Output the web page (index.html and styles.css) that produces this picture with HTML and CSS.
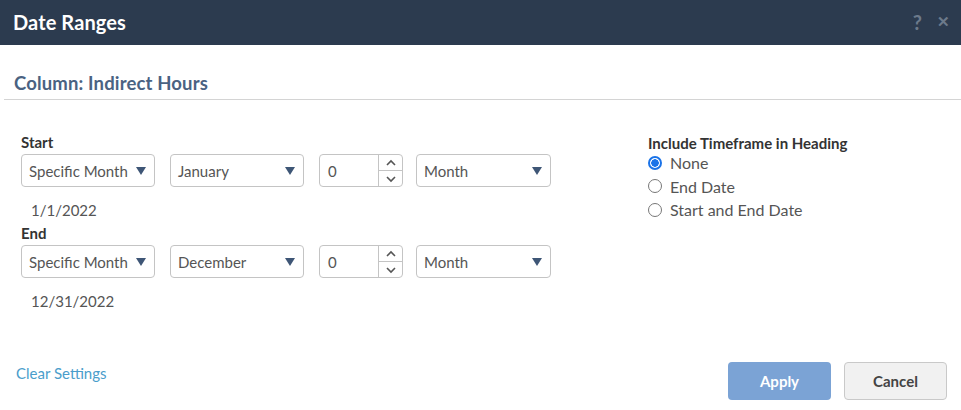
FILE: index.html
```html
<!DOCTYPE html>
<html>
<head>
<meta charset="utf-8">
<link rel="stylesheet" href="styles.css">
</head>
<body>
<div class="dialog">
  <div class="titlebar">
    <div class="title">Date Ranges</div>
    <div class="tools"><span class="tool">?</span><span class="tool close">&#x2715;</span></div>
  </div>
  <div class="subhead">Column: Indirect Hours</div>
  <div class="content">
    <div class="ranges">
      <div class="label">Start</div>
      <div class="row">
        <div class="select w134"><span>Specific Month</span><span class="caret"></span></div>
        <div class="select w134"><span>January</span><span class="caret"></span></div>
        <div class="spin"><span class="val">0</span><div class="arrows"><div class="arr up"><svg width="12" height="8" viewBox="0 0 12 8"><path d="M2 6 L6 2 L10 6" fill="none" stroke="#555" stroke-width="1.6"/></svg></div><div class="arr"><svg width="12" height="8" viewBox="0 0 12 8"><path d="M2 2 L6 6 L10 2" fill="none" stroke="#555" stroke-width="1.6"/></svg></div></div></div>
        <div class="select w135"><span>Month</span><span class="caret"></span></div>
      </div>
      <div class="date">1/1/2022</div>
      <div class="label">End</div>
      <div class="row">
        <div class="select w134"><span>Specific Month</span><span class="caret"></span></div>
        <div class="select w134"><span>December</span><span class="caret"></span></div>
        <div class="spin"><span class="val">0</span><div class="arrows"><div class="arr up"><svg width="12" height="8" viewBox="0 0 12 8"><path d="M2 6 L6 2 L10 6" fill="none" stroke="#555" stroke-width="1.6"/></svg></div><div class="arr"><svg width="12" height="8" viewBox="0 0 12 8"><path d="M2 2 L6 6 L10 2" fill="none" stroke="#555" stroke-width="1.6"/></svg></div></div></div>
        <div class="select w135"><span>Month</span><span class="caret"></span></div>
      </div>
      <div class="date">12/31/2022</div>
    </div>
    <div class="timeframe">
      <div class="label">Include Timeframe in Heading</div>
      <div class="radio"><span class="dot on"></span>None</div>
      <div class="radio"><span class="dot"></span>End Date</div>
      <div class="radio"><span class="dot"></span>Start and End Date</div>
    </div>
  </div>
  <div class="footer">
    <a class="clear">Clear Settings</a>
    <div class="buttons">
      <div class="btn apply">Apply</div>
      <div class="btn cancel">Cancel</div>
    </div>
  </div>
</div>
</body>
</html>
```
FILE: styles.css
```css
* { box-sizing: border-box; }
html, body { margin: 0; padding: 0; background: #fff; }
body { font-family: "Lato", "Noto Sans", sans-serif; color: #333; width: 961px; height: 410px; overflow: hidden; }
.dialog { width: 961px; height: 410px; display: flex; flex-direction: column; }
.titlebar { height: 45px; background: #2c3b4f; display: flex; align-items: center; justify-content: space-between; padding: 0 11px 2px 13px; }
.title { color: #fff; font-size: 20px; font-weight: 700; letter-spacing: 0.1px; }
.tools { display: flex; gap: 15px; align-items: center; color: #6c7a8b; font-weight: 700; font-size: 20px; }
.close { font-size: 15px; }
.subhead { margin: 28px 0 0 4px; padding: 0 0 7px 10px; border-bottom: 1px solid #d4d4d4; color: #4a6282; font-size: 18.5px; font-weight: 700; height: 27px; line-height: 20px; letter-spacing: 0.15px; }
.content { display: flex; padding: 33px 0 0 21px; }
.ranges { width: 627px; }
.label { font-weight: 700; font-size: 15px; color: #333; line-height: 18px; height: 18px; }
.row { display: flex; gap: 15px; margin-top: 3px; }
.select { height: 33px; border: 1px solid #c4c4c4; border-radius: 4px; display: flex; align-items: center; justify-content: space-between; padding: 0 8px 0 7px; font-size: 15px; color: #555; }
.w134 { width: 134px; }
.w135 { width: 135px; margin-left: -2px; }
.caret { width: 0; height: 0; border-left: 5px solid transparent; border-right: 5px solid transparent; border-top: 8px solid #3e5676; }
.spin { width: 84px; height: 33px; border: 1px solid #c4c4c4; border-radius: 4px; display: flex; font-size: 15px; color: #555; }
.spin .val { flex: 1; display: flex; align-items: center; padding-left: 8px; }
.arrows { width: 24px; border-left: 1px solid #c4c4c4; display: flex; flex-direction: column; }
.arr { flex: 1; display: flex; align-items: center; justify-content: center; }
.arr.up { border-bottom: 1px solid #c4c4c4; }
.date { font-size: 15px; color: #555; padding: 14px 0 0 10px; height: 37px; }
.timeframe { padding-top: 1px; }
.radio { display: flex; align-items: center; font-size: 16px; color: #555; height: 23.5px; margin-top: -1px; margin-bottom: 1px; }
.dot { width: 14px; height: 14px; border: 1px solid #777; border-radius: 50%; margin-right: 8px; }
.dot.on { border: 2px solid #1a73e8; background: radial-gradient(circle, #1a73e8 0 3.5px, #fff 4px); }
.footer { margin-top: auto; display: flex; justify-content: space-between; align-items: center; padding: 0 14px 10px 16px; }
.clear { color: #4a9dcb; font-size: 15px; margin-bottom: 16px; }
.buttons { display: flex; gap: 13px; }
.btn { width: 103px; height: 38px; border-radius: 4px; display: flex; align-items: center; justify-content: center; font-size: 15px; font-weight: 700; }
.apply { background: #7ba3d5; color: #fff; }
.cancel { background: #f1f1f1; border: 1px solid #c9c9c9; color: #444; }
```
